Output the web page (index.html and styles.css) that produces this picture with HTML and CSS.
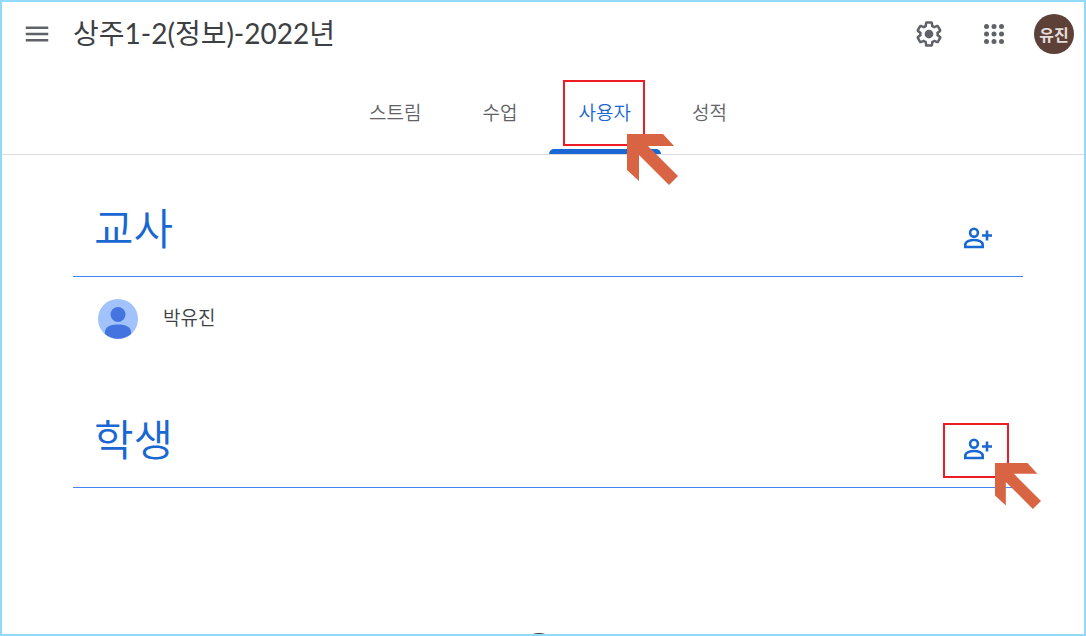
FILE: index.html
```html
<!DOCTYPE html>
<html lang="ko">
  <head>
    <meta charset="UTF-8" />
    <meta name="viewport" content="width=device-width, initial-scale=1.0" />
    <title>상주1-2(정보)-2022년</title>
    <link rel="stylesheet" href="styles.css">
  </head>
  <body>
    <div class="page">
      <header class="header">
        <button class="icon-btn" type="button" aria-label="메뉴">
          <svg viewBox="0 0 24 24"><path d="M3 18h18v-2H3v2zm0-5h18v-2H3v2zm0-7v2h18V6H3z" /></svg>
        </button>
        <h1 class="title">상주1-2(정보)-2022년</h1>
        <div class="tools">
          <button class="icon-btn" type="button" aria-label="설정">
            <svg viewBox="0 0 24 24">
              <path d="M13.85 22.25h-3.7c-.74 0-1.36-.54-1.45-1.27l-.27-1.89c-.27-.14-.53-.29-.79-.46l-1.8.72c-.7.26-1.47-.03-1.81-.65L2.2 15.53c-.35-.66-.2-1.44.36-1.88l1.53-1.19c-.01-.15-.02-.3-.02-.46 0-.15.01-.31.02-.46l-1.52-1.19c-.59-.45-.74-1.26-.37-1.88l1.85-3.19c.34-.62 1.11-.9 1.79-.63l1.81.73c.26-.17.52-.32.78-.46l.27-1.91c.09-.7.71-1.25 1.44-1.25h3.7c.74 0 1.36.54 1.45 1.27l.27 1.89c.27.14.53.29.79.46l1.8-.72c.71-.26 1.48.03 1.82.65l1.84 3.18c.36.66.2 1.44-.36 1.88l-1.52 1.19c.01.15.02.3.02.46s-.01.31-.02.46l1.52 1.19c.56.45.72 1.23.37 1.86l-1.86 3.22c-.34.62-1.11.9-1.8.63l-1.8-.72c-.26.17-.52.32-.78.46l-.27 1.91c-.1.68-.72 1.22-1.46 1.22zm-3.23-2h2.76l.37-2.55.53-.22c.44-.18.88-.44 1.34-.78l.45-.34 2.38.96 1.38-2.4-2.03-1.58.07-.56c.03-.26.06-.51.06-.78s-.03-.53-.06-.78l-.07-.56 2.03-1.58-1.39-2.4-2.39.96-.45-.35c-.42-.32-.87-.58-1.33-.77l-.52-.22-.37-2.55h-2.76l-.37 2.55-.53.21c-.44.19-.88.44-1.34.79l-.45.33-2.38-.95-1.39 2.39 2.03 1.58-.07.56a7 7 0 0 0-.06.79c0 .26.02.53.06.78l.07.56-2.03 1.58 1.38 2.4 2.39-.96.45.35c.43.33.86.58 1.33.77l.53.22.38 2.55z" />
              <circle cx="12" cy="12" r="3.5" />
            </svg>
          </button>
          <button class="icon-btn" type="button" aria-label="앱">
            <svg viewBox="0 0 24 24">
              <circle cx="6" cy="6" r="2" /><circle cx="12" cy="6" r="2" /><circle cx="18" cy="6" r="2" />
              <circle cx="6" cy="12" r="2" /><circle cx="12" cy="12" r="2" /><circle cx="18" cy="12" r="2" />
              <circle cx="6" cy="18" r="2" /><circle cx="12" cy="18" r="2" /><circle cx="18" cy="18" r="2" />
            </svg>
          </button>
          <button class="account" type="button">유진</button>
        </div>
      </header>

      <nav class="tabs">
        <a class="tab" href="#">스트림</a>
        <a class="tab" href="#">수업</a>
        <a class="tab active" href="#">사용자
          <span class="mark mark-tab"></span>
          <svg class="arrow arrow-tab" viewBox="0 0 51 51"><path d="M0 0h36l11 12H21l30 30-9 9-30-30v26L0 36z" /></svg>
        </a>
        <a class="tab" href="#">성적</a>
      </nav>

      <main class="content">
        <section class="group">
          <div class="group-head">
            <h2>교사</h2>
            <button class="invite" type="button" aria-label="교사 초대">
              <svg viewBox="0 0 30 30">
                <circle cx="11" cy="9.700" r="3.900" />
                <path d="M2.300 24v-2.300c0-3.200 4.700-4.700 8.700-4.700s8.700 1.500 8.700 4.700V24z" />
                <path d="M24 7.500v10M19 12.500h10" />
              </svg>
            </button>
          </div>
          <div class="person">
            <svg class="photo" viewBox="0 0 40 40">
              <circle cx="20" cy="20" r="20" fill="#a1c2fa" />
              <circle cx="20" cy="15.500" r="7.500" fill="#4374e0" />
              <path d="M7 35v-2c0-5 5-7.500 13-7.500S33 28 33 33v2a20 20 0 0 1-26 0z" fill="#4374e0" />
            </svg>
            <span class="name">박유진</span>
          </div>
        </section>

        <section class="group">
          <div class="group-head">
            <h2>학생</h2>
            <button class="invite" type="button" aria-label="학생 초대">
              <svg viewBox="0 0 30 30">
                <circle cx="11" cy="9.700" r="3.900" />
                <path d="M2.300 24v-2.300c0-3.200 4.700-4.700 8.700-4.700s8.700 1.500 8.700 4.700V24z" />
                <path d="M24 7.500v10M19 12.500h10" />
              </svg>
              <span class="mark mark-invite"></span>
              <svg class="arrow arrow-invite" viewBox="0 0 51 51"><path d="M0 0h36l11 12H21l30 30-9 9-30-30v26L0 36z" /></svg>
            </button>
          </div>
        </section>
      </main>

      <!-- top edge of the round illustration below the list -->
      <div class="peek"><span></span></div>
    </div>
  </body>
</html>
```
FILE: styles.css
```css
* {
  margin: 0;
  padding: 0;
  box-sizing: border-box;
}

body {
  font-family: "Noto Sans CJK KR", sans-serif;
  font-weight: 300;
  color: #3c4043;
  background-color: #fff;
}

button {
  border: none;
  background: none;
  font-family: inherit;
  cursor: pointer;
}

.page {
  display: flex;
  flex-direction: column;
  min-height: 100vh;
  border: 2px solid #93d9f8;
}

.header {
  display: flex;
  align-items: center;
  height: 64px;
  padding: 0 10px 0 20px;
}

.icon-btn {
  width: 30px;
  height: 30px;
}

.icon-btn svg {
  display: block;
  fill: #5f6368;
}

.title {
  margin-left: 21px;
  padding-bottom: 2px;
  font-family: Lato, "Noto Sans CJK KR", sans-serif;
  font-size: 28px;
  font-weight: 400;
  line-height: 40px;
}

.tools {
  display: flex;
  align-items: center;
  gap: 35px;
  margin-left: auto;
}

.account {
  width: 40px;
  height: 40px;
  margin-left: -10px;
  border-radius: 50%;
  background-color: #5d4037;
  color: #e4dedc;
  font-size: 16px;
  font-weight: 700;
  line-height: 38px;
}

.tabs {
  display: flex;
  justify-content: center;
  gap: 1px;
  height: 89px;
  padding-left: 10px;
  border-bottom: 1px solid #dadce0;
}

.tab {
  position: relative;
  padding: 0 30px;
  color: #5f6368;
  font-size: 19px;
  font-weight: 350;
  line-height: 92px;
  text-decoration: none;
}

.tab.active {
  color: #1967d2;
}

.tab.active::after {
  content: "";
  position: absolute;
  left: 0;
  right: 0;
  bottom: 0;
  height: 5px;
  border-radius: 5px 5px 0 0;
  background-color: #1967d2;
}

/* red frame and pointer */
.mark {
  position: absolute;
  border: 2px solid #ed1c24;
}

.mark-tab {
  top: 14px;
  left: 14px;
  width: 82px;
  height: 66px;
}

.mark-invite {
  top: -2px;
  left: -11px;
  width: 66px;
  height: 55px;
}

.arrow {
  position: absolute;
  z-index: 1;
  fill: #d96443;
}

.arrow-tab {
  top: 68px;
  left: 78px;
  width: 51px;
}

.content {
  width: 100%;
  max-width: 1022px;
  margin: 0 auto;
  padding: 32px 31px 0 41px;
}

.group {
  margin-bottom: 37px;
}

.group-head {
  display: flex;
  justify-content: space-between;
  align-items: flex-end;
  height: 90px;
  padding: 0 21px 14px;
  border-bottom: 1px solid #4285f4;
}

.group-head h2 {
  padding-bottom: 8px;
  color: #1967d2;
  font-size: 43px;
  font-weight: 350;
  line-height: 56px;
}

.invite {
  position: relative;
  display: flex;
  justify-content: center;
  align-items: center;
  width: 48px;
  height: 48px;
}

.invite svg {
  width: 30px;
  height: 30px;
  fill: none;
  stroke: #1967d2;
  stroke-width: 2.6;
}

.invite .arrow-invite {
  top: 38px;
  left: 41px;
  width: 46px;
  height: 46px;
  fill: #d96443;
  stroke: none;
}

.person {
  display: flex;
  align-items: center;
  gap: 25px;
  height: 84px;
  padding-left: 25px;
}

.photo {
  width: 40px;
  height: 40px;
}

.name {
  padding-bottom: 5px;
  font-size: 19px;
  font-weight: 350;
}

.peek {
  height: 1px;
  margin-top: auto;
  padding-right: 8px;
  overflow: hidden;
}

.peek span {
  display: block;
  width: 40px;
  height: 40px;
  margin: 0 auto;
  border-radius: 50%;
  background-color: #3c4043;
}
```
